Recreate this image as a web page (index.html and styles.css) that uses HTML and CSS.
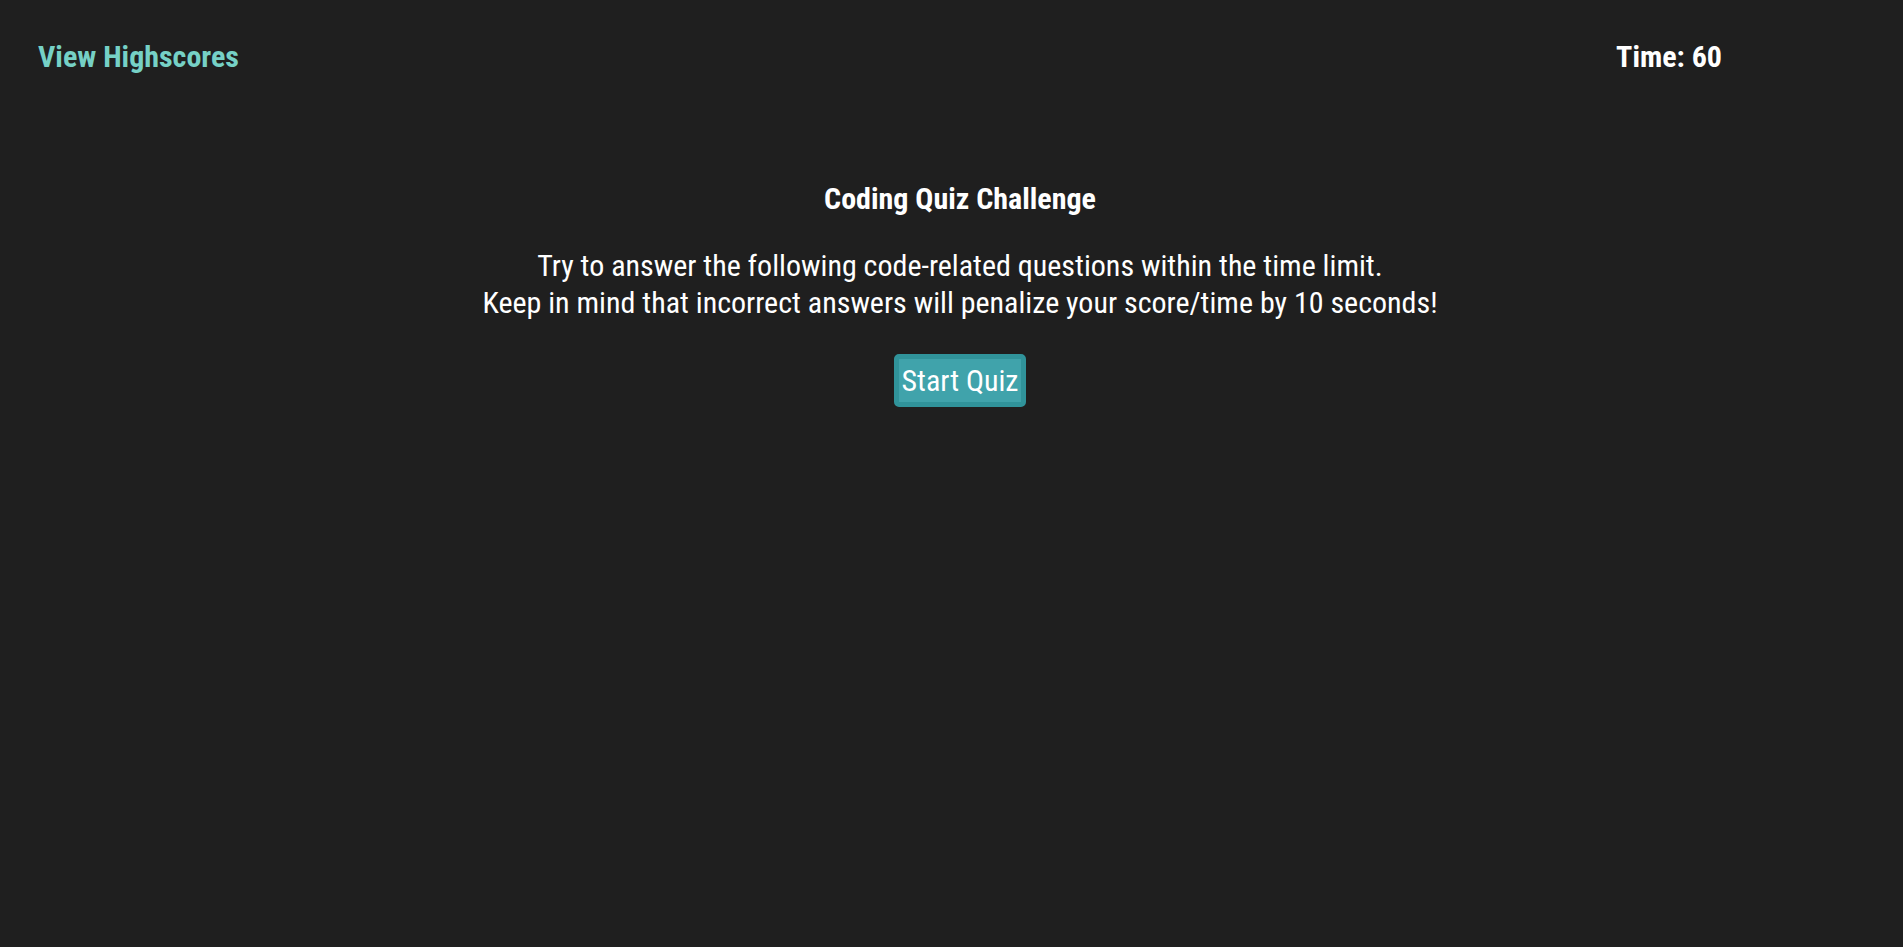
FILE: index.html
```html
<!DOCTYPE html>
<html lang="en">
<head>
<meta charset="utf-8">
<title>Coding Quiz Challenge</title>
<link rel="stylesheet" href="styles.css">
</head>
<body>
<header class="topbar">
<a class="scores-link" href="#highscores">View Highscores</a>
<p class="timer">Time: <span>60</span></p>
</header>
<main class="quiz">
<h1 class="quiz-title">Coding Quiz Challenge</h1>
<p class="quiz-intro">Try to answer the following code-related questions within the time limit.<br>Keep in mind that incorrect answers will penalize your score/time by 10 seconds!</p>
<button class="start-button" type="button">Start Quiz</button>
</main>
</body>
</html>
```
FILE: styles.css
```css
body {
  margin: 0;
  background: #1f1f1f;
  color: #fff;
  font-family: "Roboto Condensed", Roboto, sans-serif;
  font-size: 30px;
  line-height: 37px;
}
.topbar {
  display: flex;
  justify-content: space-between;
  padding: 38px 181px 0 38px;
  font-weight: 700;
}
.scores-link {
  color: #76d1c6;
  text-decoration: none;
}
.timer {
  margin: 0;
}
.quiz {
  display: flex;
  flex-direction: column;
  align-items: center;
  padding: 105px 0 0 17px;
  text-align: center;
}
.quiz-title {
  margin: 0;
  font-size: 30px;
  font-weight: 700;
}
.quiz-intro {
  margin: 30px 0 33px;
}
.start-button {
  padding: 3px 2px;
  border: 5px solid #30939a;
  border-radius: 5px;
  background: #40a3ab;
  color: #fff;
  font: inherit;
}
```
